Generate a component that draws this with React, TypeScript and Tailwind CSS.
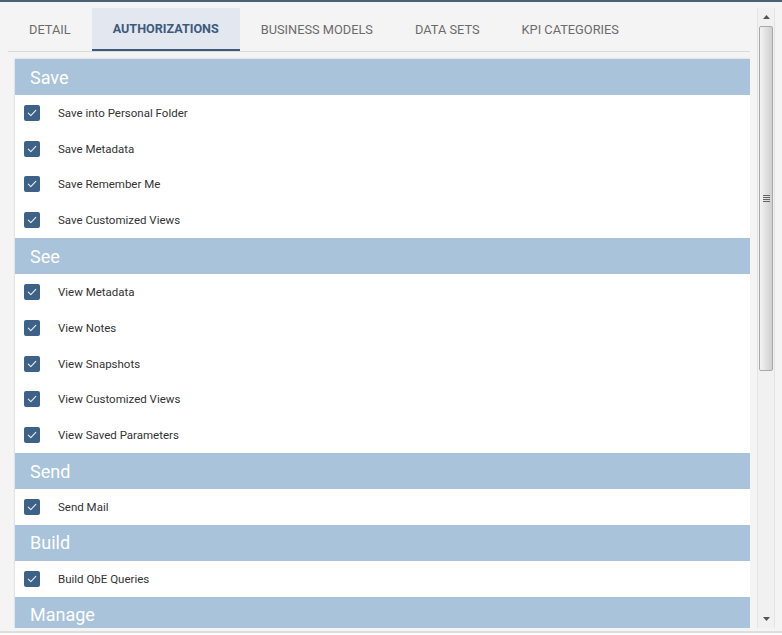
import React from "react";

const sections: { title: string; items: string[] }[] = [
  { title: "Save", items: ["Save into Personal Folder", "Save Metadata", "Save Remember Me", "Save Customized Views"] },
  { title: "See", items: ["View Metadata", "View Notes", "View Snapshots", "View Customized Views", "View Saved Parameters"] },
  { title: "Send", items: ["Send Mail"] },
  { title: "Build", items: ["Build QbE Queries"] },
  { title: "Manage", items: [] },
];

const tabs = ["DETAIL", "AUTHORIZATIONS", "BUSINESS MODELS", "DATA SETS", "KPI CATEGORIES"];

function Check() {
  return (
    <div className="w-4 h-4 rounded-[2px] bg-[#3e6287] flex items-center justify-center shrink-0">
      <svg width="12" height="12" viewBox="0 0 12 12" fill="none">
        <path d="M2.3 6.2 L4.8 8.6 L9.8 3.4" stroke="#e8eef5" strokeWidth="1.1" strokeLinecap="round" strokeLinejoin="round" />
      </svg>
    </div>
  );
}

export default function App() {
  return (
    <div
      className="w-[782px] h-[635px] bg-[#f4f4f4] border-t-2 border-[#4b5f77] overflow-hidden flex flex-col"
      style={{ fontFamily: "Roboto, 'Liberation Sans', sans-serif" }}
    >
      <div className="flex pt-[6px] pl-2 h-[626px] shrink-0">
        <div className="w-[742px] flex flex-col overflow-hidden">
          <div className="h-[44px] flex border-b border-[#dadada] shrink-0">
            {tabs.map((t, i) => (
              <div
                key={t}
                className={
                  i === 1
                    ? "px-[21px] h-[43px] flex items-center bg-[#e3e7ef] border-b-2 border-[#3d5a7c] text-[12.6px] font-bold text-[#3d5a7c]"
                    : "px-[21px] h-[43px] flex items-center text-[12.8px] text-[#6b6b6b]"
                }
              >
                <span className={i === 1 ? "mt-[2px]" : ""}>{t}</span>
              </div>
            ))}
          </div>
          <div className="mt-[7px] ml-[7px] w-[735px] bg-white shadow-[0_0_2px_rgba(0,0,0,0.2)] flex-1 overflow-hidden">
            {sections.map((s) => (
              <div key={s.title}>
                <div className="h-9 bg-[#a9c3da] flex items-center pl-[15px] text-[18px] text-white">{s.title}</div>
                {s.items.map((it) => (
                  <div key={it} className="h-[35.8px] flex items-center pl-[9px] gap-[18px] text-[11.5px] text-[#333333]">
                    <Check />
                    <span className="mt-[1px]">{it}</span>
                  </div>
                ))}
              </div>
            ))}
          </div>
        </div>
        <div className="ml-[7px] w-[18px] h-[620px] bg-[#f1f1f1] border-x border-[#e4e4e4] flex flex-col">
          <div className="h-[18px] flex items-center justify-center shrink-0">
            <svg width="7" height="4" viewBox="0 0 7 4"><path d="M0 4 L3.5 0 L7 4 Z" fill="#555" /></svg>
          </div>
          <div className="mx-[1px] h-[345px] rounded-[2px] border border-[#a9a9a9] bg-[linear-gradient(to_right,#f4f4f4,#e4e4e4_40%,#cfcfcf)] flex items-center justify-center">
            <div className="flex flex-col gap-[1px]">
              <div className="w-[7px] h-[1px] bg-[#666]" />
              <div className="w-[7px] h-[1px] bg-[#666]" />
              <div className="w-[7px] h-[1px] bg-[#666]" />
              <div className="w-[7px] h-[1px] bg-[#666]" />
            </div>
          </div>
          <div className="flex-1" />
          <div className="h-[18px] flex items-center justify-center shrink-0">
            <svg width="7" height="4" viewBox="0 0 7 4"><path d="M0 0 L3.5 4 L7 0 Z" fill="#555" /></svg>
          </div>
        </div>
      </div>
      <div className="h-[2px] bg-[#dedede] mt-[3px] shrink-0" />
      <div className="flex-1 bg-[#fafafa]" />
    </div>
  );
}
